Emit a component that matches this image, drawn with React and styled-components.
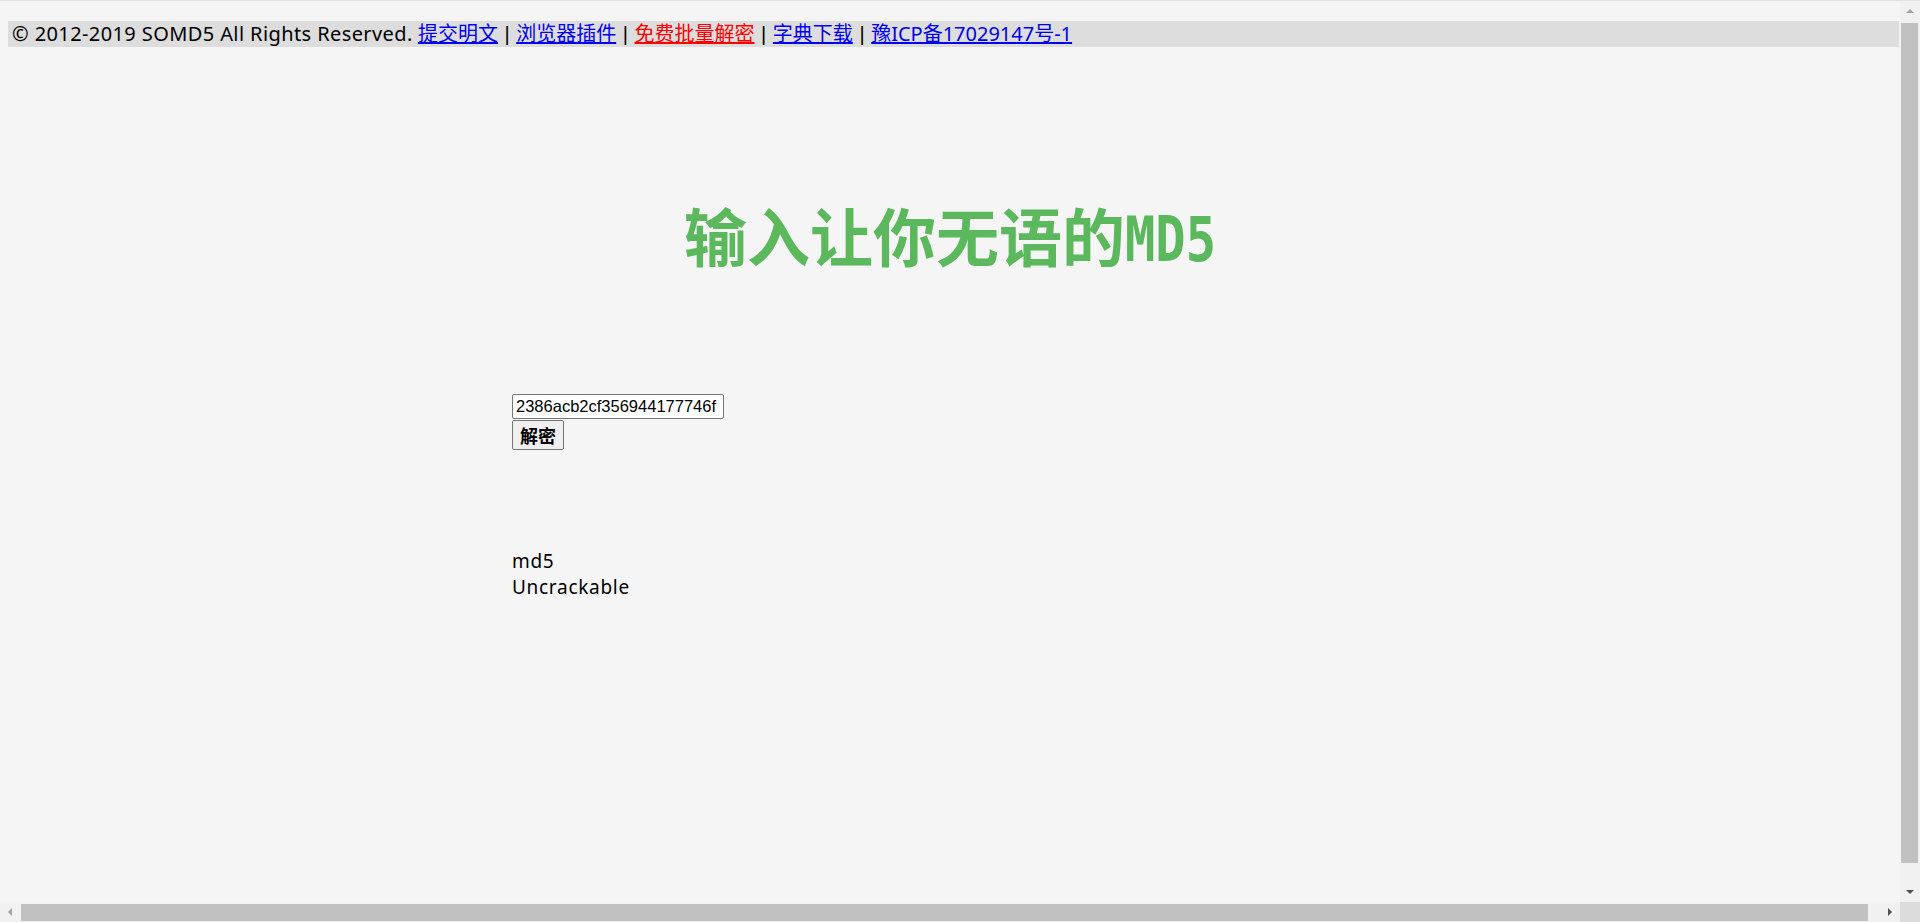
import styled, { createGlobalStyle } from "styled-components";

const GlobalStyle = createGlobalStyle`
	html, body {
		margin: 0;
		background: #f5f5f5;
	}

	body {
		color: #000;
		font-family: "Noto Sans", "Noto Sans CJK SC", sans-serif;
		overflow: hidden;
	}
`;

const Window = styled.div`
	display: grid;
	grid-template-columns: 1fr 20px;
	grid-template-rows: 1fr 20px;
	width: 100vw;
	height: 100vh;
	box-sizing: border-box;
	border-top: 1px solid #e2e2e2;
	background: #f5f5f5;
`;

const Main = styled.div`
	overflow: hidden;
	padding: 7px 8px 8px;
	min-width: 0;
	min-height: 0;
`;

const Page = styled.div`
	width: 1884px;
`;

const TopBar = styled.div`
	margin-top: 13px;
	width: 1887px;
	padding-left: 4px;
	background: #dddddd;
	font-size: 20px;
	line-height: 26px;
	white-space: nowrap;
`;

const Copyright = styled.span`
	letter-spacing: 0.4px;
`;

const Separator = styled.span`
	padding: 0 1px;
	font-family: "Liberation Sans", Arial, sans-serif;
`;

const BarLink = styled.a`
	color: ${(props) => (props.$hot ? "#ff0000" : "#0000ee")};
	text-decoration: underline;
`;

const Title = styled.h1`
	margin: 147px 0 0;
	text-align: center;
	color: #5cb85c;
	font-family: "Noto Sans CJK SC", sans-serif;
	font-size: 63px;
	font-weight: 700;
	line-height: 80px;
`;

const Narrow = styled.span`
	display: inline-block;
	margin-right: -23px;
	font-family: "DejaVu Sans Mono", monospace;
	font-size: 63px;
	font-weight: 700;
	transform: scaleX(0.8);
	transform-origin: left center;
`;

const Content = styled.div`
	width: 876px;
	margin: 0 auto;
`;

const SearchForm = styled.form`
	margin-top: 114px;
	display: flex;
	flex-direction: column;
	align-items: flex-start;
`;

const HashInput = styled.input`
	box-sizing: border-box;
	width: 212px;
	height: 25px;
	margin: 0;
	padding: 1px 3px;
	border: 1px solid #767676;
	border-radius: 2px;
	background: #fff;
	font-family: "Liberation Sans", Arial, sans-serif;
	font-size: 16.5px;
	color: #000;
`;

const SubmitButton = styled.button`
	box-sizing: border-box;
	width: 52px;
	height: 30px;
	margin: 1px 0 0;
	padding: 0 6px;
	border: 1px solid #767676;
	border-radius: 2px;
	background: #efefef;
	font-family: "Noto Sans CJK SC", sans-serif;
	font-size: 18px;
	font-weight: 700;
	line-height: 1;
	color: #000;
`;

const Result = styled.div`
	margin-top: 98px;
	font-size: 19px;
	line-height: 26px;
	letter-spacing: 0.7px;
`;

/* browser scrollbars, as they show in the screenshot */
const ScrollTrack = styled.div`
	display: flex;
	flex-direction: ${(props) => (props.$vertical ? "column" : "row")};
	background: #f1f1f1;
	min-width: 0;
	min-height: 0;
`;

const ScrollButton = styled.div`
	flex: 0 0 20px;
	display: flex;
	align-items: center;
	justify-content: center;
`;

const Arrow = styled.span`
	width: 0;
	height: 0;
	border: 4px solid transparent;
	${(props) => {
		const color = props.$disabled ? "#a3a3a3" : "#505050";
		switch (props.$dir) {
			case "up":
				return `border-bottom-color: ${color}; border-top-width: 0;`;
			case "down":
				return `border-top-color: ${color}; border-bottom-width: 0;`;
			case "left":
				return `border-right-color: ${color}; border-left-width: 0;`;
			default:
				return `border-left-color: ${color}; border-right-width: 0;`;
		}
	}}
`;

const ThumbArea = styled.div`
	flex: 1;
	display: flex;
	flex-direction: ${(props) => (props.$vertical ? "column" : "row")};
	padding: ${(props) => (props.$vertical ? "2px 2px 0 1px" : "2px 0 1px 1px")};
`;

const Thumb = styled.div`
	background: #c1c1c1;
	flex: 0 0 ${(props) => props.$size}px;
`;

const Corner = styled.div`
	background: #dcdcdc;
`;

const links = [
	{ label: "提交明文" },
	{ label: "浏览器插件" },
	{ label: "免费批量解密", hot: true },
	{ label: "字典下载" },
	{ label: "豫ICP备17029147号-1" },
];

const App = () => {
	return (
		<Window>
			<GlobalStyle />
			<Main>
				<Page>
					<TopBar>
						<Copyright>© 2012-2019 SOMD5 All Rights Reserved.</Copyright>{" "}
						{links.map((link, i) => (
							<span key={link.label}>
								{i > 0 && <Separator> | </Separator>}
								<BarLink href="#" $hot={link.hot}>
									{link.label}
								</BarLink>
							</span>
						))}
					</TopBar>
					<Title>
						输入让你无语的<Narrow>MD5</Narrow>
					</Title>
					<Content>
						<SearchForm onSubmit={(e) => e.preventDefault()}>
							<HashInput type="text" defaultValue="2386acb2cf356944177746f" />
							<SubmitButton type="submit">解密</SubmitButton>
						</SearchForm>
						<Result>
							<div>md5</div>
							<div>Uncrackable</div>
						</Result>
					</Content>
				</Page>
			</Main>
			<ScrollTrack $vertical>
				<ScrollButton>
					<Arrow $dir="up" $disabled />
				</ScrollButton>
				<ThumbArea $vertical>
					<Thumb $size={840} />
				</ThumbArea>
				<ScrollButton>
					<Arrow $dir="down" />
				</ScrollButton>
			</ScrollTrack>
			<ScrollTrack>
				<ScrollButton>
					<Arrow $dir="left" $disabled />
				</ScrollButton>
				<ThumbArea>
					<Thumb $size={1847} />
				</ThumbArea>
				<ScrollButton>
					<Arrow $dir="right" />
				</ScrollButton>
			</ScrollTrack>
			<Corner />
		</Window>
	);
};

export default App;
